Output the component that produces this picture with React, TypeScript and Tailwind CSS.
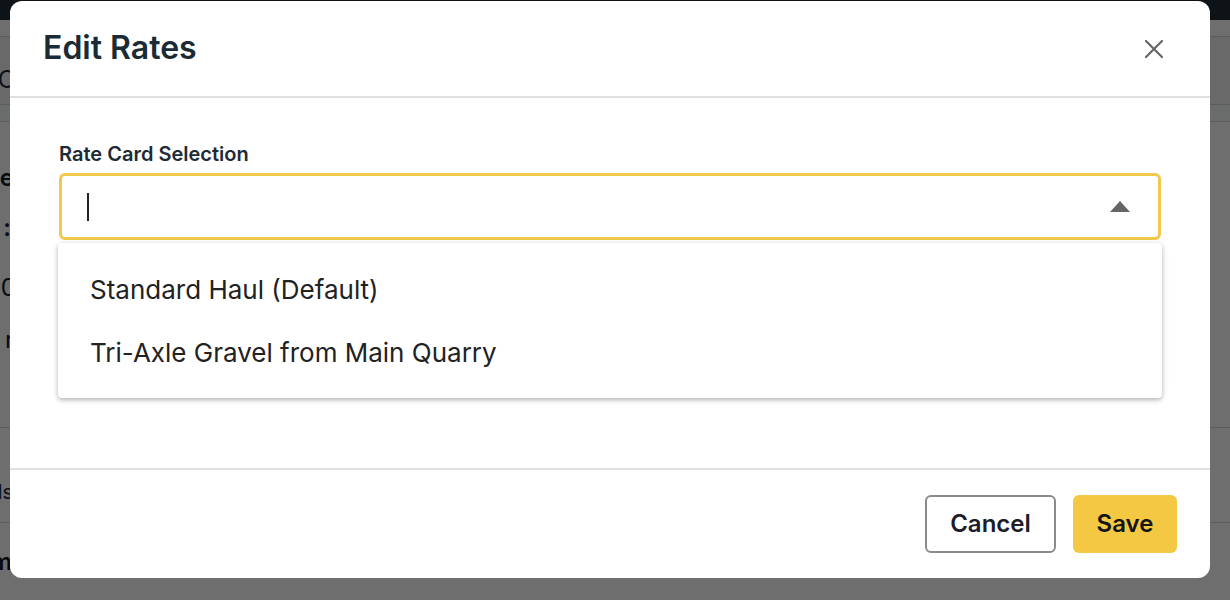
import React from "react";

const font = { fontFamily: "Inter, 'Noto Sans', sans-serif" };

// page that sits behind the dialog, only its edges show
const BackPage: React.FC = () => {
    return (
        <div className="w-[1230px] h-[600px] bg-white overflow-hidden flex flex-col" style={font}>
            <div className="h-5 bg-[#1f2c33] shrink-0" />
            <div className="h-[17px] border-b border-gray-300 shrink-0" />
            <div className="h-[68px] border-b border-gray-300 bg-gray-100 flex items-end pb-[8px] shrink-0">
                <div className="w-[10px] overflow-hidden flex justify-end text-2xl text-gray-800">
                    <span className="-mr-[6px]">O</span>
                </div>
            </div>
            <div className="h-[17px] border-b border-gray-300 bg-gray-50 shrink-0" />
            <div className="flex flex-col text-2xl text-gray-900 pt-[31px] shrink-0">
                <div className="w-[10px] overflow-hidden flex justify-end h-[50px] items-center font-semibold">
                    <span className="-mr-[4px]">e</span>
                </div>
                <div className="w-[10px] overflow-hidden flex justify-end h-[50px] items-center font-semibold">
                    <span className="-mr-[1px]">:</span>
                </div>
                <div className="w-[10px] overflow-hidden flex justify-end h-[50px] items-center mt-[10px]">
                    <span className="-mr-[6px]">0</span>
                </div>
                <div className="w-[10px] overflow-hidden flex justify-end h-[50px] items-center mt-[2px]">
                    <span className="-mr-[4px]">r</span>
                </div>
            </div>
            <div className="h-[63px] border-b border-gray-300 shrink-0" />
            <div className="h-[95px] border-b border-gray-300 flex items-center pt-[34px] shrink-0">
                <div className="w-[10px] overflow-hidden flex justify-end text-xl text-gray-800">
                    <span className="-mr-[3px]">ds</span>
                </div>
            </div>
            <div className="h-[77px] flex items-center shrink-0">
                <div className="w-[10px] overflow-hidden flex justify-end text-2xl font-semibold text-gray-900">
                    <span className="-mr-[2px]">m</span>
                </div>
            </div>
        </div>
    );
};

const options = ["Standard Haul (Default)", "Tri-Axle Gravel from Main Quarry"];

export default function App() {
    return (
        <div className="relative w-[1230px] h-[600px] overflow-hidden" style={font}>
            <BackPage />

            {/* Backdrop */}
            <div className="absolute inset-0 bg-black/[0.57] pl-[10px] pt-[1px]">
                {/* Dialog */}
                <div className="w-[1200px] h-[577px] bg-white rounded-xl flex flex-col">
                    {/* Header */}
                    <div className="h-[97px] shrink-0 border-b-2 border-[#dde1e4] flex items-center justify-between pl-[33px] pr-[46px]">
                        <h2 className="text-[32px] font-semibold text-[#1a2b36] -mt-[1px]">Edit Rates</h2>
                        <button className="text-[#666]">
                            <svg width="20" height="20" viewBox="0 0 20 20" fill="none" stroke="currentColor" strokeWidth="2.2" strokeLinecap="round">
                                <path d="M2 2 L18 18 M18 2 L2 18" />
                            </svg>
                        </button>
                    </div>

                    {/* Body */}
                    <div className="flex-1 px-[49px] pt-[44px]">
                        <label className="block text-[20px] font-semibold text-[#1d2b37] leading-[24px]">
                            Rate Card Selection
                        </label>
                        <div className="relative mt-[7px]">
                            <div className="h-[67px] border-[3px] border-[#f2c94c] rounded-md flex items-center pl-[25px] pr-[28px]">
                                <span className="w-[2px] h-[28px] bg-[#222]" />
                                <div className="flex-1" />
                                <svg width="20" height="11" viewBox="0 0 20 11" className="text-[#666]">
                                    <path d="M0 11 L10 0 L20 11 Z" fill="currentColor" />
                                </svg>
                            </div>

                            {/* Dropdown list */}
                            <div className="absolute left-[-1px] right-[-1px] top-[70px] bg-white rounded shadow-[0_2px_4px_rgba(0,0,0,0.25),0_1px_10px_rgba(0,0,0,0.08)] pt-[15px] pb-[14px] z-10">
                                {options.map((o) => (
                                    <div key={o} className="h-[63px] flex items-center px-[32px] text-[26px] text-[#222]">
                                        {o}
                                    </div>
                                ))}
                            </div>
                        </div>
                    </div>

                    {/* Footer */}
                    <div className="h-[110px] shrink-0 border-t-2 border-[#dde1e4] flex items-center justify-end gap-[17px] pr-[33px]">
                        <button className="h-[58px] w-[131px] border-2 border-[#8a8a8f] rounded-md text-[24px] font-semibold text-[#1c1c2a]">
                            Cancel
                        </button>
                        <button className="h-[58px] w-[104px] bg-[#f5c843] rounded-md text-[24px] font-semibold text-[#141414]">
                            Save
                        </button>
                    </div>
                </div>
            </div>
        </div>
    );
}
